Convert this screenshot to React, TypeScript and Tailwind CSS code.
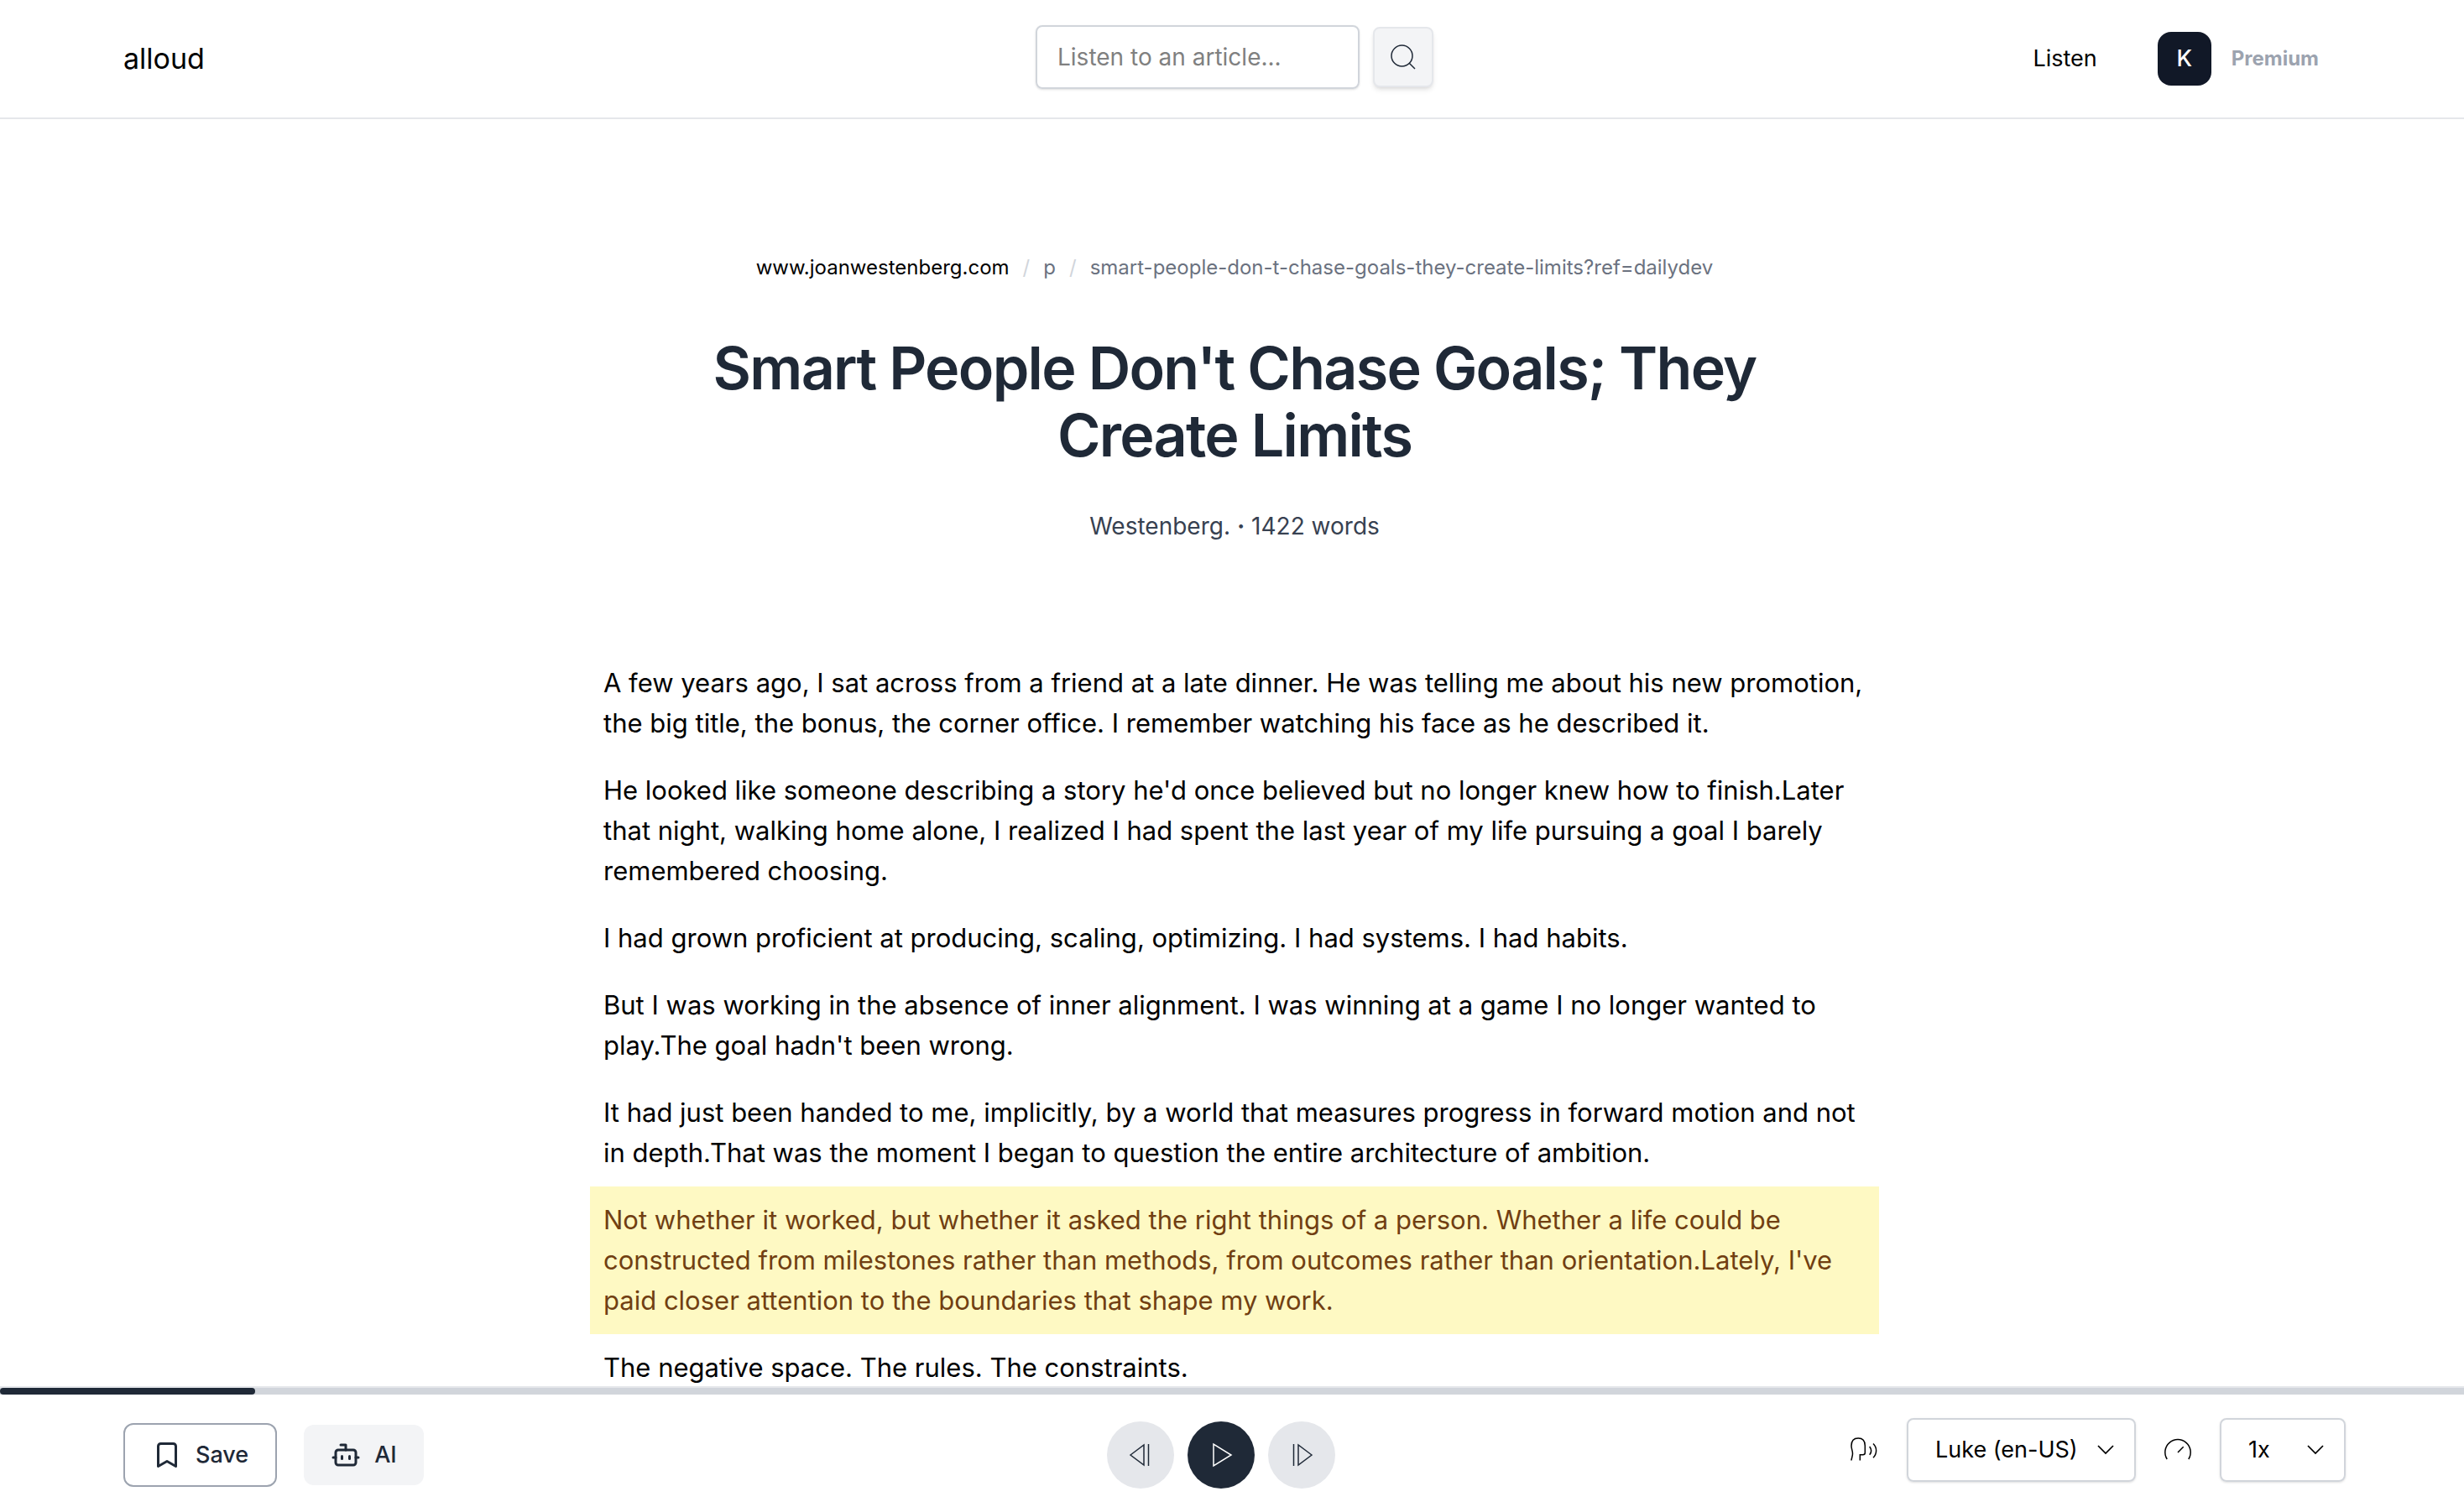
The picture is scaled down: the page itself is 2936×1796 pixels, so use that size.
import { useState } from 'react'
import { Bookmark, Bot } from 'lucide-react'

const breadcrumbs = [
  'www.joanwestenberg.com',
  'p',
  'smart-people-don-t-chase-goals-they-create-limits?ref=dailydev',
]

const paragraphs = [
  'A few years ago, I sat across from a friend at a late dinner. He was telling me about his new promotion, the big title, the bonus, the corner office. I remember watching his face as he described it.',
  "He looked like someone describing a story he'd once believed but no longer knew how to finish.Later that night, walking home alone, I realized I had spent the last year of my life pursuing a goal I barely remembered choosing.",
  'I had grown proficient at producing, scaling, optimizing. I had systems. I had habits.',
  "But I was working in the absence of inner alignment. I was winning at a game I no longer wanted to play.The goal hadn't been wrong.",
  'It had just been handed to me, implicitly, by a world that measures progress in forward motion and not in depth.That was the moment I began to question the entire architecture of ambition.',
  "Not whether it worked, but whether it asked the right things of a person. Whether a life could be constructed from milestones rather than methods, from outcomes rather than orientation.Lately, I've paid closer attention to the boundaries that shape my work.",
  'The negative space. The rules. The constraints.',
]

function SearchIcon() {
  return (
    <svg viewBox="0 0 30 30" className="size-[30px]" fill="none" stroke="currentColor" strokeWidth="1.5" aria-hidden="true">
      <circle cx="13.5" cy="13.5" r="12.5" />
      <path d="M22 22l7 7" />
    </svg>
  )
}

function StepIcon({ flip = false }: { flip?: boolean }) {
  return (
    <svg viewBox="0 0 28 28" className={flip ? 'size-7 -scale-x-100' : 'size-7'} fill="none" stroke="currentColor" strokeWidth="1.5" aria-hidden="true">
      <path d="M2 14L18 2v24z" />
      <path d="M23.5 1v26" />
    </svg>
  )
}

function PlayIcon() {
  return (
    <svg viewBox="0 0 28 30" className="h-[30px] w-7" fill="none" stroke="currentColor" strokeWidth="1.5" aria-hidden="true">
      <path d="M5 2v26l21-13z" />
    </svg>
  )
}

function VoiceIcon() {
  return (
    <svg viewBox="0 0 36 36" className="size-9" fill="none" stroke="currentColor" strokeWidth="1.5" aria-hidden="true">
      <path d="M2 30.5c.2-3 1.7-5 1.5-8.5C3.5 19 2 17 2 13c0-5.500 3-9 8.200-9s8.100 3.500 8.100 9v8.500c0 1.500-1 2.200-2.500 2.200h-3.500v6.800" />
      <path d="M23.700 14c2.300 3 2.300 7 0 9.800M28 10.500c4.800 4.500 4.800 12 0 16.700" />
    </svg>
  )
}

function GaugeIcon() {
  return (
    <svg viewBox="0 0 36 36" className="size-9" fill="none" stroke="currentColor" strokeWidth="1.5" aria-hidden="true">
      <path d="M5.200 29A15.200 15.200 0 1 1 30.800 29M18 21l6.700-6.700" />
    </svg>
  )
}

function Chevron() {
  return (
    <svg viewBox="0 0 20 12" className="pointer-events-none absolute top-8 right-[26px] h-3 w-5" fill="none" stroke="currentColor" strokeWidth="1.75" aria-hidden="true">
      <path d="M1 1l9 9 9-9" />
    </svg>
  )
}

export default function App() {
  const [voice, setVoice] = useState('Luke (en-US)')
  const [speed, setSpeed] = useState('1x')
  const [active] = useState(5)
  const progress = 10.35

  return (
    <div className="flex h-screen flex-col overflow-hidden bg-white font-[Inter,sans-serif] text-black">
      <header className="grid h-[142px] shrink-0 grid-cols-[1fr_auto_1fr] items-center border-b-2 border-[#e5e7eb] pr-[141px] pl-[147px]">
        <a href="#" className="text-[34px] leading-[48px]">
          alloud
        </a>
        <form className="flex items-center gap-4 pb-1" onSubmit={e => e.preventDefault()}>
          <input
            type="text"
            aria-label="Article address"
            placeholder="Listen to an article..."
            className="h-[76px] w-[386px] rounded-lg border-2 border-[#d1d5db] px-6 text-[28px] shadow-sm placeholder:text-[#808080]"
          />
          <button
            type="submit"
            aria-label="Search"
            className="flex size-[72px] items-center justify-center rounded-lg border-2 border-[#e5e7eb] bg-[#f3f4f6] text-[#1f2937] shadow-md"
          >
            <SearchIcon />
          </button>
        </form>
        <div className="flex items-center justify-end pr-8">
          <a href="#" className="mr-[72px] text-[27px]">
            Listen
          </a>
          <button type="button" className="size-16 rounded-2xl bg-[#111827] text-[27px] font-medium text-white">
            K
          </button>
          <span className="ml-6 text-[24px] font-bold text-[#9ca3af]">Premium</span>
        </div>
      </header>

      <main className="min-h-0 flex-1 overflow-hidden pt-[153px] pr-[141px] pl-[147px]">
        <div className="mx-auto max-w-[1536px]">
          <nav aria-label="Breadcrumb">
            <ol className="flex items-center justify-center gap-4 text-[24px] leading-[48px] text-[#6b7280]">
              {breadcrumbs.map((crumb, i) => (
                <li key={crumb} className="flex gap-4">
                  {i > 0 && <span className="text-[#d1d5db]">/</span>}
                  <a href="#" className={i === 0 ? 'text-black' : ''}>
                    {crumb}
                  </a>
                </li>
              ))}
            </ol>
          </nav>
          <h1 className="mx-auto mt-14 max-w-[1344px] text-center text-[70px] leading-[80px] font-semibold tracking-tight text-[#1f2937]">
            Smart People Don't Chase Goals; They Create Limits
          </h1>
          <p className="mt-11 text-center text-[28px] leading-[48px] text-[#374151]">
            Westenberg. <span className="font-bold">·</span> 1422 words
          </p>
          <article className="mt-[123px] text-[31px] leading-[48px]">
            {paragraphs.map((text, i) => (
              <p
                key={i}
                className={i === active ? 'bg-[#fef9c3] p-4 text-[#713f12]' : 'p-4'}
              >
                {text}
              </p>
            ))}
          </article>
        </div>
      </main>

      <footer className="shrink-0 border-t-2 border-[#e5e7eb] bg-white">
        <div className="h-2 bg-[#d1d5db]">
          <div className="h-2 rounded-full bg-[#1f2937]" style={{ width: `${progress}%` }}></div>
        </div>
        <div className="grid h-[134px] grid-cols-[1fr_auto_1fr] items-start pt-7 pr-[141px] pl-[147px]">
          <div className="flex items-center gap-8 pt-[6px] text-[27px] font-medium text-[#1f2937]">
            <button type="button" className="flex h-[76px] items-center gap-4 rounded-xl border-2 border-[#9ca3af] px-8">
              <Bookmark className="size-9" />
              Save
            </button>
            <button type="button" className="flex h-[72px] items-center gap-4 rounded-xl bg-[#f3f4f6] px-8">
              <Bot className="size-9" />
              AI
            </button>
          </div>
          <div className="mr-8 flex gap-4 pt-1">
            <button type="button" aria-label="Previous" className="flex size-20 items-center justify-center rounded-full bg-[#e5e7eb] text-[#1f2937]">
              <StepIcon />
            </button>
            <button type="button" aria-label="Play" className="flex size-20 items-center justify-center rounded-full bg-[#1f2937] text-white">
              <PlayIcon />
            </button>
            <button type="button" aria-label="Next" className="flex size-20 items-center justify-center rounded-full bg-[#e5e7eb] text-[#1f2937]">
              <StepIcon flip />
            </button>
          </div>
          <div className="flex items-center justify-end gap-8">
            <VoiceIcon />
            <div className="relative">
              <select
                aria-label="Voice"
                value={voice}
                onChange={e => setVoice(e.target.value)}
                className="h-[76px] w-[273px] appearance-none rounded-lg border-2 border-[#d1d5db] pl-8 text-[27px] shadow-sm"
              >
                <option>Luke (en-US)</option>
              </select>
              <Chevron />
            </div>
            <GaugeIcon />
            <div className="relative">
              <select
                aria-label="Speed"
                value={speed}
                onChange={e => setSpeed(e.target.value)}
                className="h-[76px] w-[150px] appearance-none rounded-lg border-2 border-[#d1d5db] pl-8 text-[27px] shadow-sm"
              >
                <option>1x</option>
              </select>
              <Chevron />
            </div>
          </div>
        </div>
      </footer>
    </div>
  )
}
